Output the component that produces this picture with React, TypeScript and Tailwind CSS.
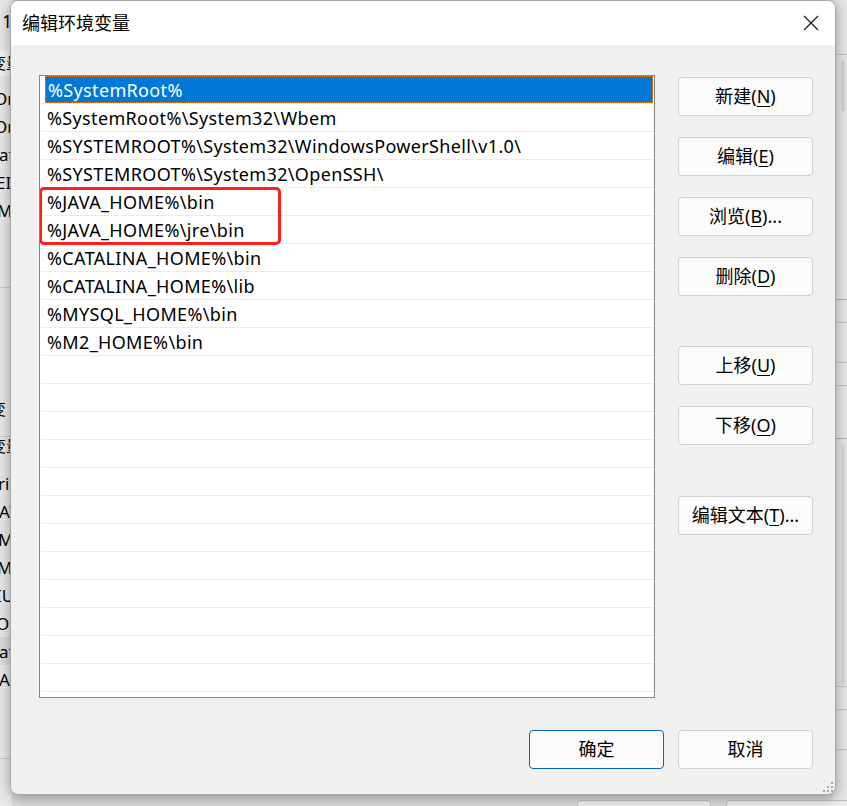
import React from "react";

const rows = [
  "%SystemRoot%",
  "%SystemRoot%\\System32\\Wbem",
  "%SYSTEMROOT%\\System32\\WindowsPowerShell\\v1.0\\",
  "%SYSTEMROOT%\\System32\\OpenSSH\\",
  "%JAVA_HOME%\\bin",
  "%JAVA_HOME%\\jre\\bin",
  "%CATALINA_HOME%\\bin",
  "%CATALINA_HOME%\\lib",
  "%MYSQL_HOME%\\bin",
  "%M2_HOME%\\bin",
  "", "", "", "", "", "", "", "", "", "", "", "",
];

function Btn({ label, u, tail, primary }: { label: string; u?: string; tail?: string; primary?: boolean }) {
  return (
    <div
      className={
        "w-[135px] h-[39px] rounded-[4px] bg-[#fbfbfb] border flex items-center justify-center text-[18px] text-black " +
        (primary ? "border-[#0067c0]" : "border-[#d0d0d0]")
      }
    >
      <span>
        {label}
        {u !== undefined && (
          <>
            (<span className="underline underline-offset-[3px] decoration-1">{u}</span>){tail}
          </>
        )}
      </span>
    </div>
  );
}

function Frag({ h, text, ml, cls }: { h: string; text?: string; ml: string; cls?: string }) {
  return (
    <div className={"flex items-center whitespace-nowrap shrink-0 " + h + " " + (cls ?? "")}>
      <span className={ml}>{text}</span>
    </div>
  );
}

export default function App() {
  return (
    <div className="relative w-[847px] h-[806px] overflow-hidden bg-[#d9d9d9] font-['Noto_Sans','Noto_Sans_CJK_SC',sans-serif]">
      <div className="flex h-[806px]">
        {/* background window (left strip) */}
        <div className="w-[12px] h-[806px] bg-[#e9e9e9] overflow-hidden text-[17px] text-black leading-none flex flex-col">
          <Frag h="h-[42px]" text="1" ml="ml-[2px] text-[18px]" />
          <div className="h-[8px] shrink-0" />
          <Frag h="h-[26px]" text="变量" ml="ml-[-10px] text-[16px]" cls="bg-[#f2f2f2]" />
          <div className="h-[8px] shrink-0" />
          <Frag h="h-[28px]" text="On" ml="ml-[-6px]" />
          <Frag h="h-[28px]" text="On" ml="ml-[-6px]" />
          <Frag h="h-[28px]" text="at" ml="ml-[-1px]" />
          <Frag h="h-[28px]" text="EI" ml="ml-[-4px]" />
          <Frag h="h-[28px]" text="M" ml="ml-[-3px]" />
          <div className="h-[64px] shrink-0 border-b border-[#c8c8c8]" />
          <div className="h-[107px] shrink-0" />
          <Frag h="h-[28px]" text="变" ml="ml-[-10px] text-[16px]" />
          <div className="h-[14px] shrink-0 border-b border-[#c8c8c8]" />
          <Frag h="h-[18px]" text="变量" ml="ml-[-10px] text-[16px]" />
          <div className="h-[14px] shrink-0" />
          <Frag h="h-[28px]" text="ri" ml="ml-[-2px]" />
          <Frag h="h-[28px]" text="AV" ml="ml-[-1px]" />
          <Frag h="h-[28px]" text="M2" ml="ml-[-2px]" />
          <Frag h="h-[28px]" text="MY" ml="ml-[-3px]" />
          <Frag h="h-[28px]" text="IU" ml="ml-[-4px]" />
          <Frag h="h-[28px]" text="OS" ml="ml-[-4px]" />
          <Frag h="h-[28px]" text="at" ml="ml-[-1px]" cls="bg-[#dcdcdc]" />
          <Frag h="h-[28px]" text="A" ml="ml-[-1px]" />
          <div className="h-[66px] shrink-0 border-b border-[#c8c8c8]" />
        </div>

        <div className="flex-1" />

        {/* background window (right strip) */}
        <div className="w-[14px] h-[806px] bg-[#e6e6e6] flex flex-col">
          <div className="h-[55px] shrink-0 border-b border-[#c4c4c4]" />
          <div className="h-[245px] shrink-0 border-b border-[#b0b0b0] pl-[8px] pt-[6px]">
            <div className="w-[4px] h-[50px] bg-[#d4d4d4]" />
          </div>
          <div className="h-[23px] shrink-0 border-b border-[#c4c4c4]" />
          <div className="h-[40px] shrink-0 border-b border-[#c4c4c4]" />
          <div className="h-[23px] shrink-0 border-b border-[#c4c4c4]" />
          <div className="h-[53px] shrink-0 border-b border-[#b0b0b0]" />
          <div className="h-[248px] shrink-0 border-b border-[#c4c4c4] pl-[8px] pt-[6px]">
            <div className="w-[4px] h-[240px] bg-[#dadada]" />
          </div>
          <div className="h-[23px] shrink-0 border-b border-[#c4c4c4]" />
          <div className="h-[40px] shrink-0 border-b border-[#c4c4c4]" />
        </div>
      </div>

      {/* background buttons peeking at bottom */}
      <div className="absolute left-[577px] top-[800px] flex gap-[15px]">
        <div className="w-[134px] h-[20px] rounded-[4px] border border-[#bdbdbd] bg-[#ececec]" />
        <div className="w-[134px] h-[20px] rounded-[4px] border border-[#bdbdbd] bg-[#ececec]" />
      </div>

      {/* dialog window */}
      <div className="absolute left-[10px] top-0 w-[826px] h-[795px] rounded-[8px] border border-[#a8a8a8] bg-[#f0f0f0] shadow-[0_2px_14px_rgba(0,0,0,0.35)] overflow-hidden flex flex-col">
        {/* title bar */}
        <div className="h-[44px] bg-white flex items-center justify-between shrink-0">
          <div className="pl-[11px] text-[18px] text-black leading-none pb-[1px]">编辑环境变量</div>
          <div className="w-[48px] h-[44px] flex items-center justify-center">
            <svg width="16" height="16" viewBox="0 0 16 16">
              <path d="M1 1 L15 15 M15 1 L1 15" stroke="#1a1a1a" strokeWidth="1.2" fill="none" />
            </svg>
          </div>
        </div>

        {/* body */}
        <div className="flex-1 pl-[28px] pt-[30px] relative">
          <div className="flex">
            {/* list */}
            <div className="relative w-[616px] h-[623px] border border-[#868686] bg-white px-[1px] overflow-hidden">
              {rows.map((r, i) => (
                <div key={i} className="h-[28px] border-b border-[#ebebeb] text-[18px] tracking-[0.35px] text-black leading-none">
                  {i === 0 ? (
                    <div className="ml-[4px] h-[27px] bg-[#0078d7] text-white flex items-center pl-[2px] border border-dotted border-[#f08a24]">
                      {r}
                    </div>
                  ) : (
                    <div className="h-[27px] flex items-center pl-[6px] whitespace-nowrap">{r}</div>
                  )}
                </div>
              ))}
              <div className="absolute left-[-1px] top-[111px] w-[242px] h-[58px] border-[3px] border-[#fe1e1e] rounded-[5px]" />
            </div>

            {/* side buttons */}
            <div className="ml-[23px] pt-[2px] flex flex-col">
              <div className="flex flex-col gap-[21px]">
                <Btn label="新建" u="N" />
                <Btn label="编辑" u="E" />
                <Btn label="浏览" u="B" tail="..." />
                <Btn label="删除" u="D" />
              </div>
              <div className="flex flex-col gap-[21px] mt-[50px]">
                <Btn label="上移" u="U" />
                <Btn label="下移" u="O" />
              </div>
              <div className="mt-[51px]">
                <Btn label="编辑文本" u="T" tail="..." />
              </div>
            </div>
          </div>

          {/* bottom buttons */}
          <div className="flex justify-end gap-[14px] pr-[22px] mt-[32px]">
            <Btn label="确定" primary />
            <Btn label="取消" />
          </div>

          {/* size grip */}
          <div className="absolute right-[2px] bottom-[2px] grid grid-cols-3 gap-[2px]">
            <div className="w-[2px] h-[2px]" />
            <div className="w-[2px] h-[2px]" />
            <div className="w-[2px] h-[2px] bg-[#a8a8a8]" />
            <div className="w-[2px] h-[2px]" />
            <div className="w-[2px] h-[2px] bg-[#a8a8a8]" />
            <div className="w-[2px] h-[2px] bg-[#a8a8a8]" />
            <div className="w-[2px] h-[2px] bg-[#a8a8a8]" />
            <div className="w-[2px] h-[2px] bg-[#a8a8a8]" />
            <div className="w-[2px] h-[2px] bg-[#a8a8a8]" />
          </div>
        </div>
      </div>
    </div>
  );
}
